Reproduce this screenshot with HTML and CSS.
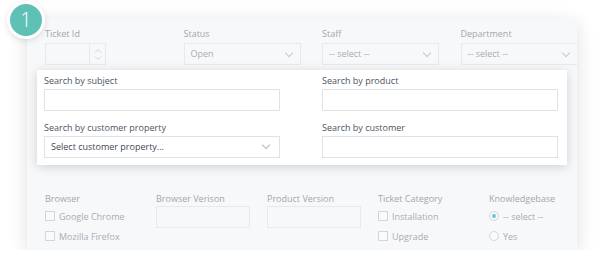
FILE: index.html
```html
<!DOCTYPE html>
<html lang="en">
<head>
	<meta charset="UTF-8">
	<title>Ticket filters</title>
	<link rel="stylesheet" href="styles.css">
</head>
<body>
	<div class="badge">1</div>
	<div class="panel">
		<div class="row row-top">
			<div class="field">
				<label>Ticket Id</label>
				<div class="number">
					<span class="input"></span>
					<span class="spin">
						<svg width="8" height="5" viewBox="0 0 8 5"><path d="M1 4.5L4 1.5L7 4.5" fill="none" stroke="#c9ccd2" stroke-width="0.8"/></svg>
						<svg width="8" height="5" viewBox="0 0 8 5"><path d="M1 0.5L4 3.5L7 0.5" fill="none" stroke="#c9ccd2" stroke-width="0.8"/></svg>
					</span>
				</div>
			</div>
			<div class="field">
				<label>Status</label>
				<div class="select">Open<i class="chev"></i></div>
			</div>
			<div class="field">
				<label>Staff</label>
				<div class="select">-- select --<i class="chev"></i></div>
			</div>
			<div class="field">
				<label>Department</label>
				<div class="select">-- select --<i class="chev"></i></div>
			</div>
		</div>

		<div class="row row-bottom">
			<div class="field">
				<label>Browser</label>
				<div class="check"><span class="box"></span>Google Chrome</div>
				<div class="check"><span class="box"></span>Mozilla Firefox</div>
			</div>
			<div class="field">
				<label>Browser Verison</label>
				<span class="input"></span>
			</div>
			<div class="field">
				<label>Product Version</label>
				<span class="input"></span>
			</div>
			<div class="field">
				<label>Ticket Category</label>
				<div class="check"><span class="box"></span>Installation</div>
				<div class="check"><span class="box"></span>Upgrade</div>
			</div>
			<div class="field">
				<label>Knowledgebase</label>
				<div class="check"><span class="radio on"></span>-- select --</div>
				<div class="check"><span class="radio"></span>Yes</div>
			</div>
		</div>

		<div class="popup">
			<div class="pfield">
				<label>Search by subject</label>
				<span class="pinput"></span>
			</div>
			<div class="pfield">
				<label>Search by product</label>
				<span class="pinput"></span>
			</div>
			<div class="pfield">
				<label>Search by customer property</label>
				<div class="pinput pselect">Select customer property...<i class="chev"></i></div>
			</div>
			<div class="pfield">
				<label>Search by customer</label>
				<span class="pinput"></span>
			</div>
		</div>
	</div>
</body>
</html>
```

FILE: styles.css
```css
html, body {
	margin:0;
	padding:0;
	background:#fff;
	font-family:"Open Sans", sans-serif;
}

body {
	position:relative;
	padding-top:19px;
}

.panel {
	position:relative;
	box-sizing:border-box;
	width:550px;
	height:231px;
	margin-left:27px;
	padding:8px 0 0 18px;
	background:#f7f8fa;
	box-shadow:0 4px 18px rgba(0,0,0,.13);
	overflow:hidden;
}

.badge {
	position:absolute;
	left:7px;
	top:1px;
	width:32px;
	height:32px;
	border:3px solid #fff;
	border-radius:50%;
	background:#5fc1b6;
	color:#fff;
	font-size:20px;
	font-weight:300;
	line-height:32px;
	text-align:center;
	box-shadow:0 2px 6px rgba(0,0,0,.12);
	z-index:3;
}

label {
	display:block;
	font-size:9px;
	line-height:13px;
	color:#a3a7ae;
	margin-bottom:3px;
}

.row {
	display:grid;
}

.row-top {
	grid-template-columns:repeat(4, 117px);
	column-gap:21.5px;
}

.row-bottom {
	margin-top:127px;
	grid-template-columns:repeat(5, 94px);
	column-gap:17px;
}

.input, .select {
	display:block;
	box-sizing:border-box;
	height:22px;
	border:1px solid #e7e9ed;
	background:#f7f8fa;
}

.number {
	display:flex;
	width:61px;
}

.number .input {
	width:45px;
}

.spin {
	box-sizing:border-box;
	width:16px;
	height:22px;
	border:1px solid #e7e9ed;
	border-left:none;
	display:flex;
	flex-direction:column;
	align-items:center;
	justify-content:center;
	gap:3px;
}

.spin svg {
	display:block;
}

.select {
	position:relative;
	padding-left:6px;
	font-size:9px;
	line-height:20px;
	color:#a9adb4;
}

.chev {
	position:absolute;
	right:8px;
	top:6px;
	width:5px;
	height:5px;
	border-right:1px solid #c6c9cf;
	border-bottom:1px solid #c6c9cf;
	transform:rotate(45deg);
}

.check {
	display:flex;
	align-items:center;
	height:20px;
	font-size:9px;
	color:#a9adb4;
}

.row-bottom label {
	margin-bottom:1px;
}

.box, .radio {
	box-sizing:border-box;
	width:10px;
	height:10px;
	margin-right:4px;
	border:1px solid #d3d6db;
	background:#f9fafb;
}

.radio {
	border-radius:50%;
	position:relative;
}

.radio.on::after {
	content:"";
	position:absolute;
	left:2px;
	top:2px;
	width:4px;
	height:4px;
	border-radius:50%;
	background:#6ec3dd;
}

.popup {
	position:absolute;
	left:10px;
	top:51px;
	box-sizing:border-box;
	width:530px;
	height:95px;
	padding:4px 0 0 7px;
	background:#fff;
	box-shadow:0 2px 10px rgba(0,0,0,.16);
	display:grid;
	grid-template-columns:236px 236px;
	column-gap:42px;
	row-gap:3px;
	z-index:2;
}

.popup label {
	color:#4d5462;
	margin-bottom:2px;
}

.pinput {
	display:block;
	box-sizing:border-box;
	height:22px;
	border:1px solid #dfe2e8;
	background:#fff;
}

.pselect {
	position:relative;
	padding-left:6px;
	font-size:9px;
	line-height:20px;
	color:#3f4654;
}

.pselect .chev {
	right:10px;
	top:5px;
	border-color:#b3b7bf;
}
```
